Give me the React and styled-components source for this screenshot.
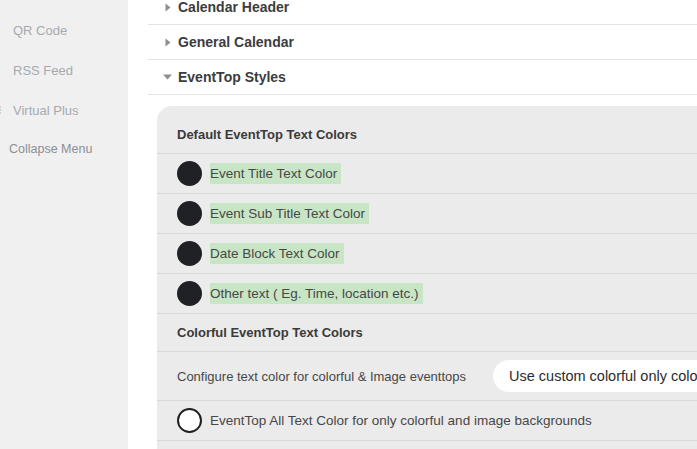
import React from "react";
import styled, { createGlobalStyle } from "styled-components";

const Global = createGlobalStyle`
  html, body {
    margin: 0;
    padding: 0;
    background: #ffffff;
    overflow: hidden;
  }
  body {
    font-family: "Liberation Sans", Arial, sans-serif;
    -webkit-font-smoothing: antialiased;
  }
`;

const Page = styled.div`
  display: flex;
  width: 697px;
  height: 449px;
  overflow: hidden;
`;

const Sidebar = styled.nav`
  flex: 0 0 128px;
  background: #f0f0f1;
  display: flex;
  flex-direction: column;
  padding-top: 10px;
`;

const NavItem = styled.div`
  display: flex;
  align-items: center;
  height: 40px;
  padding-left: 13px;
  font-size: 13px;
  color: #a7aaad;
  position: relative;
`;

const NavIcon = styled.svg`
  position: absolute;
  left: -9px;
  top: 50%;
  transform: translateY(-50%);
`;

const Collapse = styled.div`
  padding-left: 9px;
  margin-top: 12px;
  font-size: 12.5px;
  color: #8c8f94;
`;

const Main = styled.main`
  flex: 1;
  min-width: 0;
  padding-left: 20px;
  margin-top: -10px;
`;

const SectionRow = styled.div`
  display: flex;
  align-items: center;
  height: 34px;
  border-bottom: 1px solid #e3e3e3;
  padding-left: 15px;
  gap: 6px;
  font-size: 14px;
  font-weight: 700;
  color: #3c3c3c;
`;

const Caret = styled.span`
  display: inline-flex;
  width: 9px;
  justify-content: center;
  color: #8e8e8e;
`;

const Panel = styled.section`
  margin: 11px 0 0 9px;
  background: #ebebeb;
  border-top-left-radius: 15px;
`;

const GroupTitle = styled.div`
  display: flex;
  align-items: ${(p) => (p.$tall ? "flex-end" : "center")};
  height: ${(p) => (p.$tall ? "48px" : "38px")};
  padding: ${(p) => (p.$tall ? "0 20px 11px" : "0 20px")};
  box-sizing: border-box;
  border-bottom: 1px solid #d8d8d8;
  font-size: 13px;
  font-weight: 700;
  color: #3a3a3a;
`;

const ColorRow = styled.div`
  display: flex;
  align-items: center;
  gap: 8px;
  height: 39px;
  padding-left: 20px;
  border-bottom: 1px solid #d8d8d8;
`;

const Swatch = styled.span`
  flex: 0 0 auto;
  width: ${(p) => (p.$empty ? "21px" : "25px")};
  height: ${(p) => (p.$empty ? "21px" : "25px")};
  border-radius: 50%;
  background: ${(p) => (p.$empty ? "#ffffff" : "#202124")};
  border: ${(p) => (p.$empty ? "2px solid #202124" : "none")};
`;

const Label = styled.span`
  font-size: 13.5px;
  color: #474747;
  line-height: 21px;
  padding-right: 4px;
  background: ${(p) => (p.$marked ? "#c8e6c5" : "transparent")};
`;

const SettingRow = styled.div`
  display: flex;
  align-items: center;
  height: 48px;
  padding-left: 20px;
  border-bottom: 1px solid #d8d8d8;
  white-space: nowrap;
`;

const SettingLabel = styled.span`
  font-size: 13px;
  color: #474747;
  width: 316px;
  flex: 0 0 auto;
`;

const Select = styled.div`
  flex: 0 0 auto;
  height: 32px;
  border-radius: 16px;
  background: #ffffff;
  display: flex;
  align-items: center;
  padding: 0 16px;
  font-size: 14.5px;
  color: #2c2c2c;
`;

const rows = [
  "Event Title Text Color",
  "Event Sub Title Text Color",
  "Date Block Text Color",
  "Other text ( Eg. Time, location etc.)",
];

function TriangleRight() {
  return (
    <svg width="6" height="9" viewBox="0 0 6 9">
      <path d="M0.5 0.5 L5.5 4.5 L0.5 8.5 Z" fill="#8e8e8e" />
    </svg>
  );
}

function TriangleDown() {
  return (
    <svg width="9" height="6" viewBox="0 0 9 6">
      <path d="M0 0.5 L9 0.5 L4.5 5.5 Z" fill="#8e8e8e" />
    </svg>
  );
}

export default function App() {
  return (
    <>
      <Global />
      <Page>
        <Sidebar>
          <NavItem>QR Code</NavItem>
          <NavItem>RSS Feed</NavItem>
          <NavItem>
            <NavIcon width="12" height="12" viewBox="0 0 12 12">
              <path d="M2 3 L10 3 M2 6 L10 6 M2 9 L10 9" stroke="#c3c4c7" strokeWidth="1.6" />
            </NavIcon>
            Virtual Plus
          </NavItem>
          <Collapse>Collapse Menu</Collapse>
        </Sidebar>
        <Main>
          <SectionRow>
            <Caret><TriangleRight /></Caret>
            Calendar Header
          </SectionRow>
          <SectionRow>
            <Caret><TriangleRight /></Caret>
            General Calendar
          </SectionRow>
          <SectionRow>
            <Caret><TriangleDown /></Caret>
            EventTop Styles
          </SectionRow>
          <Panel>
            <GroupTitle $tall>Default EventTop Text Colors</GroupTitle>
            {rows.map((r) => (
              <ColorRow key={r}>
                <Swatch />
                <Label $marked>{r}</Label>
              </ColorRow>
            ))}
            <GroupTitle>Colorful EventTop Text Colors</GroupTitle>
            <SettingRow>
              <SettingLabel>Configure text color for colorful &amp; Image eventtops</SettingLabel>
              <Select>Use custom colorful only colors</Select>
            </SettingRow>
            <ColorRow>
              <Swatch $empty />
              <Label>EventTop All Text Color for only colorful and image backgrounds</Label>
            </ColorRow>
            <ColorRow />
          </Panel>
        </Main>
      </Page>
    </>
  );
}
